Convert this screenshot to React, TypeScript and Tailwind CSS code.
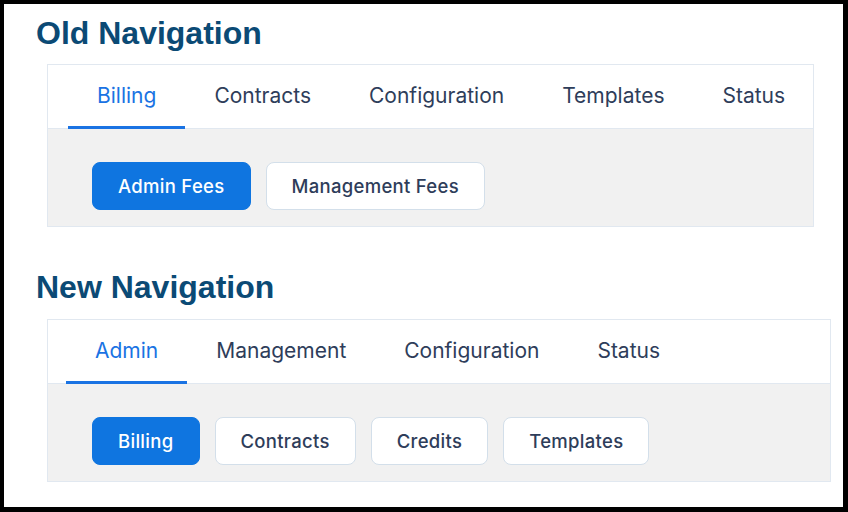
import { useState } from 'react';

type NavProps = {
  tabs: string[];
  subTabs: string[];
  width: string;
  inset: string;
};

/* ── Tabbed nav with a row of pill buttons underneath ─────────────── */
function NavBlock({ tabs, subTabs, width, inset }: NavProps) {
  const [tab, setTab] = useState(tabs[0]);
  const [sub, setSub] = useState(subTabs[0]);

  return (
    <div className={`ml-[11px] border border-[#e1e8f0] ${width}`}>
      {/* Top tabs */}
      <div className={`flex h-[64px] items-stretch border-b border-[#e1e8f0] bg-white ${inset}`}>
        {tabs.map(t => (
          <button
            key={t}
            onClick={() => setTab(t)}
            className={`relative px-[29px] pb-[2px] text-[21px] leading-none ${
              t === tab ? 'text-[#1a73e3]' : 'text-[#2e3d5a]'
            }`}
          >
            {t}
            {t === tab && <span className="absolute bottom-[-1px] left-0 right-0 h-[3px] bg-[#1a73e3]" />}
          </button>
        ))}
      </div>

      {/* Sub buttons */}
      <div className="flex gap-[15px] bg-[#f1f1f1] pb-[16px] pl-[44px] pt-[33px]">
        {subTabs.map(s => (
          <button
            key={s}
            onClick={() => setSub(s)}
            className={`h-[48px] rounded-[8px] border px-[25px] text-[18.5px] font-medium leading-none tracking-[0.3px] ${
              s === sub
                ? 'border-[#0f75e0] bg-[#0f75e0] text-white'
                : 'border-[#d3dfea] bg-white text-[#2e3d5a]'
            }`}
          >
            {s}
          </button>
        ))}
      </div>
    </div>
  );
}

export default function App() {
  return (
    <div
      className="h-[512px] w-[848px] border-b-[5px] border-l-4 border-r-[5px] border-t-4 border-black bg-white"
      style={{ fontFamily: 'Inter, "Noto Sans", sans-serif' }}
    >
      <div className="pl-[32px] pt-[9px]">
        <h1 className="text-[32px] font-bold leading-[40px] text-[#0b4a75] [font-family:'Liberation_Sans',Arial,sans-serif]">
          Old Navigation
        </h1>
        <div className="mt-[11px]">
          <NavBlock
            tabs={['Billing', 'Contracts', 'Configuration', 'Templates', 'Status']}
            subTabs={['Admin Fees', 'Management Fees']}
            width="w-[767px]"
            inset="pl-[20px]"
          />
        </div>

        <h1 className="mt-[40px] text-[32px] font-bold leading-[40px] text-[#0b4a75] [font-family:'Liberation_Sans',Arial,sans-serif]">
          New Navigation
        </h1>
        <div className="mt-[12px]">
          <NavBlock
            tabs={['Admin', 'Management', 'Configuration', 'Status']}
            subTabs={['Billing', 'Contracts', 'Credits', 'Templates']}
            width="w-[784px]"
            inset="pl-[18px]"
          />
        </div>
      </div>
    </div>
  );
}
